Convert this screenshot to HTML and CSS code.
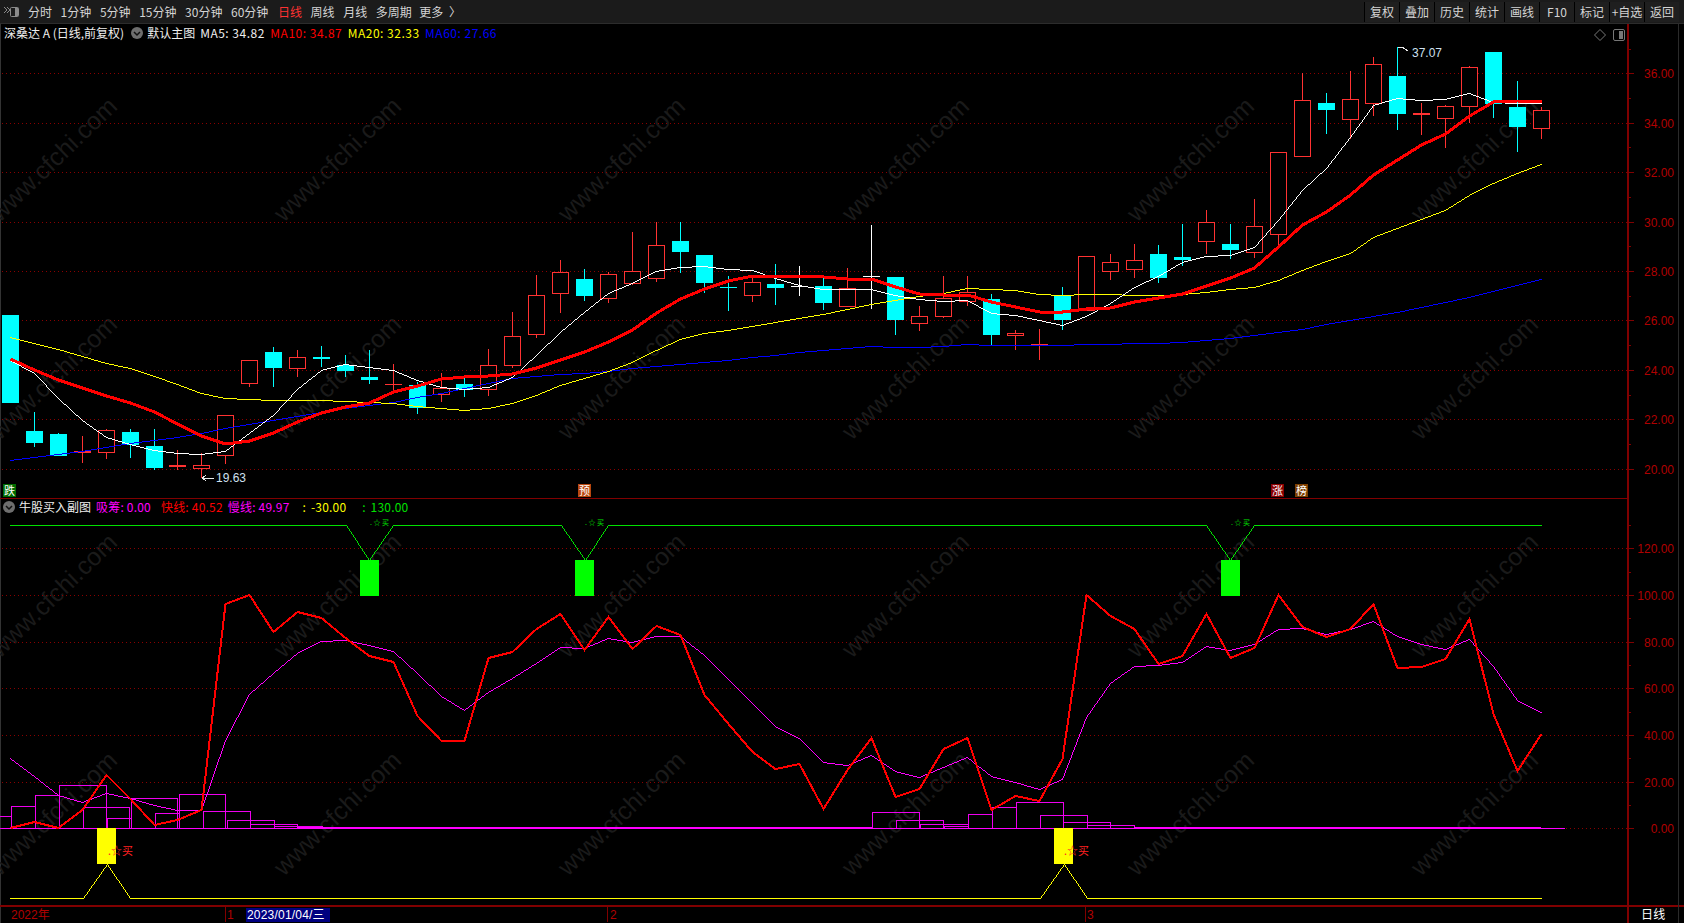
FILE: index.html
```html
<!DOCTYPE html>
<html lang="zh-CN">
<head>
<meta charset="utf-8">
<title>深桑达 A 日线</title>
<link rel="stylesheet" href="styles.css">
</head>
<body>
<div class="app">
  <header class="toolbar">
    <svg class="tb-icon" width="17" height="12" viewBox="0 0 17 12">
      <path class="tb-icon-line" d="M1 1l3 3-3 3M4 1l3 3-3 3"/>
      <rect class="tb-icon-line" x="7.5" y="1.5" width="8" height="9" rx="1"/>
      <rect class="tb-icon-fill" x="12" y="2" width="3" height="8"/>
    </svg>
    <nav class="periods">
      <span>分时</span><span>1分钟</span><span>5分钟</span><span>15分钟</span><span>30分钟</span><span>60分钟</span>
      <span class="active">日线</span><span>周线</span><span>月线</span><span>多周期</span><span class="more">更多 〉</span>
    </nav>
    <nav class="actions">
      <span>复权</span><span>叠加</span><span>历史</span><span>统计</span><span>画线</span><span>F10</span><span>标记</span><span>+自选</span><span>返回</span>
    </nav>
  </header>
  <main class="stage">
    <div id="chart" class="chart"></div>
    <div class="legend legend-main">
      <span class="l-name">深桑达 A (日线,前复权)</span>
      <svg class="dot" width="12" height="12" viewBox="0 0 12 12"><circle class="dot-bg" cx="6" cy="6" r="6"/><path class="dot-mark" d="M3 5l3 3 3-3"/></svg>
      <span class="l-title">默认主图</span>
      <span class="ma c-white">MA5: 34.82</span>
      <span class="ma c-red">MA10: 34.87</span>
      <span class="ma c-yellow">MA20: 32.33</span>
      <span class="ma c-blue">MA60: 27.66</span>
    </div>
    <div class="legend legend-sub">
      <svg class="dot" width="12" height="12" viewBox="0 0 12 12"><circle class="dot-bg" cx="6" cy="6" r="6"/><path class="dot-mark" d="M3 5l3 3 3-3"/></svg>
      <span class="l-title">牛股买入副图</span>
      <span class="val v-absorb c-magenta">吸筹: 0.00</span>
      <span class="val v-fast c-red">快线: 40.52</span>
      <span class="val v-slow c-magenta">慢线: 49.97</span>
      <span class="val v-low c-yellow">&nbsp;: -30.00</span>
      <span class="val v-high c-green">&nbsp;: 130.00</span>
    </div>
    <svg class="corner-icons" width="34" height="14" viewBox="0 0 34 14">
      <path class="ci-line" d="M7 1.5l5.5 5.5L7 12.5 1.5 7z"/>
      <rect class="ci-line" x="20.5" y="1.5" width="11" height="11" rx="1.5"/>
      <rect class="ci-fill" x="26" y="3" width="4" height="8"/>
    </svg>
  </main>
</div>
<script src="chart.js"></script>
</body>
</html>
```
FILE: styles.css
```css
* { box-sizing: border-box; }
html, body { margin: 0; padding: 0; background: #000; }
body { font-family: "Noto Sans CJK SC", "Liberation Sans", sans-serif; font-size: 12px; color: #ddd; }
.app { width: 1684px; height: 923px; display: flex; flex-direction: column; overflow: hidden; background: #000; }

.toolbar { height: 24px; flex: none; display: flex; align-items: center; background: #1b1b1b; border-bottom: 1px solid #2c2c2c; padding: 0 5px 0 3px; }
.tb-icon { flex: none; margin-right: 8px; }
.tb-icon-line { fill: none; stroke: #8a8a8a; stroke-width: 1; }
.tb-icon-fill { fill: #8a8a8a; }
.periods { display: flex; gap: 8.6px; line-height: 18px; white-space: nowrap; color: #d4d4d4; }
.periods .active { color: #ff3232; margin-left: 1px; }
.periods .more { word-spacing: 3px; margin-left: -1px; }
.actions { margin-left: auto; display: flex; gap: 1px; height: 20px; margin-top: 1px; background: #000; padding: 0 0 0 1px; }
.actions span { width: 34px; background: #1f1f1f; text-align: center; line-height: 20px; color: #d4d4d4; white-space: nowrap; overflow: hidden; }

.stage { position: relative; flex: 1; min-height: 0; border-left: 1px solid #333; }
.chart { position: absolute; left: -1px; top: 0; }
.chart svg { display: block; }

.legend { position: absolute; display: flex; align-items: center; height: 18px; white-space: nowrap; line-height: 18px; }
.legend-main { left: 3px; top: 0; }
.legend-sub { left: 2px; top: 474px; }
.legend-main .dot { margin: 0 4px 0 7px; }
.legend-sub .dot { margin-right: 4px; }
.ma { letter-spacing: 0.5px; margin-left: 5.5px; }
.legend-main .c-white { margin-left: 5px; }
.val { letter-spacing: 0.2px; }
.v-absorb { margin-left: 5px; }
.v-fast { margin-left: 10px; }
.v-slow { margin-left: 5px; }
.v-low { margin-left: 8px; word-spacing: 2px; }
.v-high { margin-left: 11px; word-spacing: 2px; }
.l-name, .l-title, .c-white { color: #eee; }
.c-red { color: #ff0000; }
.c-yellow { color: #ffff00; }
.c-blue { color: #0000ff; }
.c-magenta { color: #ff00ff; }
.c-green { color: #00e000; }
.dot-bg { fill: #6e6e6e; }
.dot-mark { fill: none; stroke: #111; stroke-width: 1.5; }

.corner-icons { position: absolute; left: 1592px; top: 4px; }
.ci-line { fill: none; stroke: #777; stroke-width: 1; }
.ci-fill { fill: #777; }

.plot { shape-rendering: crispEdges; }
.grid { stroke: #8a0000; stroke-width: 1; stroke-dasharray: 1 3; fill: none; }
.axis { stroke: #800000; stroke-width: 1; fill: none; }
.axis2 { stroke: #800000; stroke-width: 2; fill: none; }
.frame { stroke: #2a2a2a; stroke-width: 1; fill: none; }
.wm { font: 25px "Liberation Sans", sans-serif; fill: #1a1a1a; }
.tick { font: 12px "Liberation Sans", sans-serif; fill: #b00000; text-anchor: end; }
.tl { font: 12px "Liberation Sans", "Noto Sans CJK SC", sans-serif; fill: #b00000; }
.tl-date { font: 12px "Liberation Sans", "Noto Sans CJK SC", sans-serif; fill: #fff; letter-spacing: 0.2px; }
.date-bg { fill: #000080; }
.mark { font: 12px "Liberation Sans", sans-serif; fill: #cfe0f0; }
.mark-line { stroke: #e8e8e8; stroke-width: 1; fill: none; }
.tag { font: 11px "Noto Sans CJK SC", sans-serif; fill: #fff; text-anchor: middle; }
.tag-green { fill: #006a00; }
.tag-orange { fill: #b8470f; }
.tag-red { fill: #8a0000; }
.tag-brown { fill: #7c3e00; }
.w-r { stroke: #ff3232; stroke-width: 1; fill: none; }
.w-c { stroke: #00ffff; stroke-width: 1; fill: none; }
.w-w { stroke: #ffffff; stroke-width: 1; fill: none; }
.b-r { stroke: #ff3232; stroke-width: 1; fill: #000; }
.f-r { fill: #ff3232; }
.f-c { fill: #00ffff; }
.f-w { fill: #ffffff; }
.ma5 { fill: #ffffff; }
.ma10 { stroke: #ff0000; stroke-width: 3; fill: none; stroke-linejoin: round; }
.ma20 { fill: #ffff00; }
.ma60 { fill: #0000ff; }
.fast { stroke: #ff0000; stroke-width: 2; fill: none; }
.slow { fill: #ff00ff; }
.hist { stroke: #ee00ee; stroke-width: 1; fill: none; }
.base { stroke: #ff00ff; stroke-width: 1; fill: none; }
.base2 { stroke: #ff00ff; stroke-width: 2; fill: none; }
.glow { fill: #00e000; }
.gbar { fill: #00ff00; }
.ylow { fill: #ffff00; }
.ybar { fill: #ffff00; }
.buy { font: 11px "Noto Sans CJK SC", sans-serif; fill: #ff2020; }
.gtiny { font: 7px "Noto Sans CJK SC", sans-serif; fill: #00e000; }
```
FILE: chart.js
```js
(function () {
  var X = function (n) { return Math.round(10 + 23.92 * n); };
  // [colour, bodyTop, bodyBottom, wickTop, wickBottom]
  var candles = [
    ['c',315,403,315,403],['c',431,443,412,447],['c',434,456,433,456],['r',451,453,436,463],['r',430,453,429,459],
    ['c',432,445,429,458],['c',446,468,429,470],['r',465,467,450,470],['r',465,469,453,478],['r',415,456,415,464],
    ['r',360,384,360,387],['c',352,368,347,387],['r',357,369,350,377],['c',357,359,346,367],['c',365,371,355,377],
    ['c',377,380,350,384],['r',384,385,364,391],['c',385,408,382,414],['r',388,395,373,402],['c',384,390,375,397],
    ['r',365,390,349,396],['r',336,366,312,368],['r',295,335,275,338],['r',272,294,260,313],['c',279,296,269,301],
    ['r',274,299,272,303],['r',271,284,232,285],['r',245,279,222,282],['c',241,252,222,273],['c',255,283,255,293],
    ['c',287,288,276,311],['r',282,296,276,302],['c',284,288,264,305],['w',286,287,266,296],['c',286,303,278,310],
    ['r',288,307,268,307],['w',276,277,225,309],['c',277,320,277,335],['r',316,324,306,331],['r',298,317,276,318],
    ['r',292,302,276,306],['c',299,335,294,345],['r',333,336,330,350],['r',344,345,329,360],['c',296,320,287,330],
    ['r',256,311,256,311],['r',262,272,254,280],['r',260,270,244,278],['c',254,278,245,283],['c',257,260,224,266],
    ['r',222,242,210,254],['c',244,250,224,259],['r',226,253,199,258],['r',152,235,152,247],['r',100,157,73,157],
    ['c',103,110,93,134],['r',99,120,71,139],['r',64,104,57,116],['c',76,114,47,130],['r',113,115,103,135],
    ['r',106,119,105,148],['r',67,107,66,123],['c',52,104,52,118],['c',107,127,81,152],['r',110,129,107,139]
  ];
  var ma5 = [360,373,398,420,437,444,450,453,454,451,433,415,389,370,364,367,370,380,387,389,387,377,355,332,312,293,283,271,267,266,269,270,278,285,289,289,289,295,299,301,300,313,315,320,325,316,303,287,276,262,256,255,247,220,190,168,137,105,98,100,99,93,102,103,103];
  var ma10 = [359,370,380,388,396,403,412,424,436,444,441,433,422,413,407,403,392,386,379,377,376,374,368,360,352,342,330,313,299,289,281,276,276,276,277,279,279,287,294,295,295,302,307,312,312,309,308,302,298,294,286,278,268,247,225,212,195,175,160,145,134,116,102,101,101];
  var ma20 = [337,343,349,356,363,368,376,384,393,398,399,400,400,400,401,402,403,406,408,410,408,403,395,385,378,371,362,350,339,333,330,326,322,318,314,309,304,300,296,293,288,289,290,294,295,294,294,295,295,294,292,289,287,280,270,261,253,237,228,219,210,195,183,173,164];
  var ma60 = [460,457,454,451,447,443,440,437,433,428,424,420,416,412,408,405,402,397,393,388,383,378,376,374,373,371,368,366,364,362,360,357,355,352,350,348,346,347,347,346,344,345,345,345,345,344,344,343,343,342,340,338,335,332,329,324,320,316,312,307,302,297,291,285,279];
  var fast = [828,822,828,810,775,799,825,820,810,604,595,632,612,618,638,656,662,716,741,741,658,652,629,614,650,617,649,626,635,695,724,752,769,764,809,770,738,797,789,749,738,810,796,801,759,595,616,629,664,656,614,658,648,595,627,637,629,604,668,667,659,619,714,771,734];
  var slow = [758,776,795,802,793,798,805,810,810,740,694,673,653,641,640,645,651,673,696,710,692,678,663,647,648,638,642,636,636,655,679,703,726,738,762,765,755,771,777,767,757,776,782,789,779,717,683,666,665,662,646,650,644,629,628,634,629,621,636,644,649,639,666,700,712];
  // left, right, top of each hollow histogram box
  var hist = [[-10,11,816],[11,35,806],[35,59,795],[59,106,785],[83,129,807],[107,131,818],[131,177,798],[155,179,813],[179,225,794],[203,250,811],[227,274,820],[250,297,824],[274,322,826],[872,919,812],[896,943,820],[920,968,824],[944,968,826],[968,992,814],[992,1016,807],[1016,1063,802],[1040,1087,815],[1063,1110,822],[1087,1134,825]];

  var o = [];
  var line = function (c, x1, y1, x2, y2) { o.push('<line class="' + c + '" x1="' + x1 + '" y1="' + y1 + '" x2="' + x2 + '" y2="' + y2 + '"/>'); };
  var rect = function (c, x, y, w, h) { o.push('<rect class="' + c + '" x="' + x + '" y="' + y + '" width="' + w + '" height="' + h + '"/>'); };
  var text = function (c, x, y, s) { o.push('<text class="' + c + '" x="' + x + '" y="' + y + '">' + s + '</text>'); };
  var poly = function (c, ys) {
    var p = ys.map(function (y, i) { return (X(i) + 0.5) + ',' + y; }).join(' ');
    o.push('<polyline class="' + c + '" points="' + p + '"/>');
  };
  // single-pixel aliased line (Bresenham), drawn as horizontal pixel runs
  var hair = function (c, pts) {
    var d = [];
    var run = null;
    var put = function (x, y) {
      if (run && run.y === y && run.x2 === x) { run.x2 = x + 1; return; }
      if (run) { d.push('M' + run.x1 + ' ' + run.y + 'H' + run.x2 + 'V' + (run.y + 1) + 'H' + run.x1 + 'z'); }
      run = { x1: x, x2: x + 1, y: y };
    };
    for (var k = 0; k + 1 < pts.length; k++) {
      var x0 = pts[k][0], y0 = pts[k][1], x1 = pts[k + 1][0], y1 = pts[k + 1][1];
      var dx = Math.abs(x1 - x0), dy = -Math.abs(y1 - y0);
      var sx = x0 < x1 ? 1 : -1, sy = y0 < y1 ? 1 : -1, err = dx + dy;
      while (true) {
        put(x0, y0);
        if (x0 === x1 && y0 === y1) { break; }
        var e2 = 2 * err;
        if (e2 >= dy) { err += dy; x0 += sx; }
        if (e2 <= dx) { err += dx; y0 += sy; }
      }
    }
    put(-5, -5);
    o.push('<path class="' + c + '" d="' + d.join('') + '"/>');
  };
  var series = function (c, ys) { hair(c, ys.map(function (y, i) { return [X(i), y]; })); };

  // watermark
  [53, 337, 621, 905, 1190, 1474].forEach(function (cx) {
    [159, 377, 595, 813].forEach(function (cy) {
      o.push('<text class="wm" text-anchor="middle" transform="translate(' + cx + ' ' + cy + ') rotate(-44)" y="9">www.cfchi.com</text>');
    });
  });

  o.push('<g class="plot">');
  // grid and axes
  var y, v;
  for (v = 36; v >= 20; v -= 2) { y = Math.round(73.3 + (36 - v) * 24.71) + 0.5; line('grid', 2, y, 1627, y); }
  for (v = 120; v >= 0; v -= 20) { y = Math.round(828.3 - v * 2.3333) + 0.5; line('grid', 2, y, 1627, y); }
  line('axis2', 1628, 24, 1628, 923);
  line('axis', 0, 498.5, 1628, 498.5);
  line('axis2', 0, 906, 1684, 906);
  line('frame', 1678.5, 24, 1678.5, 923);
  line('axis', 225.5, 906, 225.5, 922);
  line('axis', 607.5, 906, 607.5, 922);
  line('axis', 1085.5, 906, 1085.5, 922);
  for (v = 37; v >= 20; v -= 1) {
    y = Math.round(73.3 + (36 - v) * 24.71) + 0.5;
    line('axis', 1629, y, v % 2 ? 1631 : 1634, y);
  }
  for (v = 130; v >= 0; v -= 10) {
    y = Math.round(828.3 - v * 2.3333) + 0.5;
    line('axis', 1629, y, v % 20 ? 1631 : 1634, y);
  }

  // sub chart: histogram and signals
  hist.forEach(function (h) { rect('hist', h[0] + 0.5, h[2] + 0.5, h[1] - h[0], 828 - h[2]); });
  line('base', 2, 828.5, 1565, 828.5);
  line('base2', 297, 828, 872, 828);
  line('base2', 1134, 828, 1541, 828);

  hair('glow', [[10,525],[346,525],[369,560],[393,525],[561,525],[585,560],[608,525],[1206,525],[1230,560],[1254,525],[1541,525]]);
  [360, 575, 1221].forEach(function (x) { rect('gbar', x, 560, 19, 36); });
  hair('ylow', [[10,898],[83,898],[107,864],[130,898],[1040,898],[1064,864],[1087,898],[1541,898]]);
  [97, 1054].forEach(function (x) { rect('ybar', x, 828, 19, 36); });
  series('slow', slow);
  poly('fast', fast);
  o.push('</g>');
  [107, 1063].forEach(function (x) { text('buy', x + 1, 855, '.☆买'); });
  [369, 584, 1230].forEach(function (x) { text('gtiny', x + 1, 525, '. ☆ 买'); });

  o.push('<g class="plot">');
  // candles
  candles.forEach(function (c, n) {
    var x = X(n), t = c[0];
    line('w-' + t, x + 0.5, c[3], x + 0.5, c[4]);
    if (t === 'c' || c[2] - c[1] <= 2) { rect('f-' + t, x - 8, c[1], 17, c[2] - c[1]); }
    else { rect('b-r', x - 7.5, c[1] + 0.5, 16, c[2] - c[1] - 1); }
  });
  series('ma60', ma60);
  series('ma20', ma20);
  series('ma5', ma5);
  poly('ma10', ma10);
  // high / low markers
  o.push('<polyline class="mark-line" points="1398,47 1402,47 1408,51"/>');
  o.push('<polyline class="mark-line" points="206,475 202.5,478 206,481"/>');
  line('mark-line', 203, 478.5, 214, 478.5);
  o.push('</g>');
  text('mark', 1412, 57, '37.07');
  text('mark', 216, 482, '19.63');

  // tags
  [['tag-green', 3, '跌'], ['tag-orange', 578, '预'], ['tag-red', 1271, '涨'], ['tag-brown', 1295, '榜']].forEach(function (g) {
    rect(g[0], g[1], 484, 13, 13);
    text('tag', g[1] + 6.5, 495, g[2]);
  });

  // axis labels
  for (v = 36; v >= 20; v -= 2) { text('tick', 1674, Math.round(73.3 + (36 - v) * 24.71) + 4.5, v.toFixed(2)); }
  for (v = 120; v >= 0; v -= 20) { text('tick', 1674, Math.round(828.3 - v * 2.3333) + 4.5, v.toFixed(2)); }

  // time axis
  text('tl', 11, 919, '2022年');
  text('tl', 227, 919, '1');
  rect('date-bg', 246, 908, 84, 14);
  text('tl-date', 247, 919, '2023/01/04/三');
  text('tl', 610, 919, '2');
  text('tl', 1087, 919, '3');
  text('tl-date', 1641, 919, '日线');

  document.getElementById('chart').innerHTML =
    '<svg width="1684" height="899" viewBox="0 24 1684 899" xmlns="http://www.w3.org/2000/svg">' + o.join('') + '</svg>';
})();
```
